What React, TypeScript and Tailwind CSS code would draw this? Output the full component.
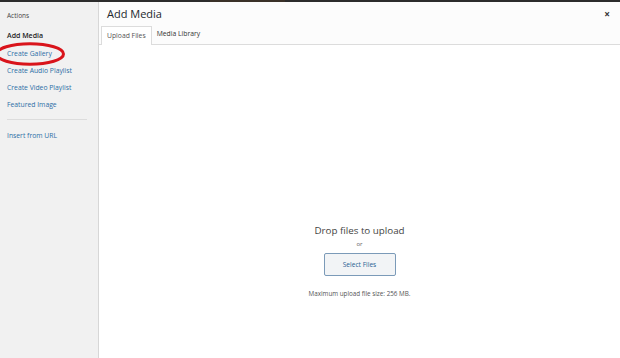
import React from "react";

export default function App() {
  const links = ["Create Gallery", "Create Audio Playlist", "Create Video Playlist", "Featured Image"];
  return (
    <div className="w-[620px] h-[358px] flex flex-col overflow-hidden bg-white" style={{ fontFamily: '"Open Sans", "Noto Sans", sans-serif' }}>
      <div className="h-[2px] bg-[#2c2c2c] flex shrink-0">
        <div className="ml-[210px] w-[75px] bg-[#3a3128]" />
      </div>
      <div className="flex flex-1 min-h-0">
        <aside className="relative w-[99px] shrink-0 bg-[#f1f1f1] border-r border-[#d7d7d7] px-[7px] pt-[8px]">
          <div className="text-[6.5px] text-[#444] leading-[12px]">Actions</div>
          <div className="mt-[8px] text-[7px] text-[#1d1d1d] font-semibold leading-[12px]">Add Media</div>
          <div className="mt-[6px] flex flex-col gap-[5px]">
            {links.map((l) => (
              <div key={l} className="text-[6.8px] text-[#2d6fa6] leading-[12px]">{l}</div>
            ))}
          </div>
          <div className="mt-[8px] mr-[4px] h-px bg-[#dcdcdc]" />
          <div className="mt-[10px] text-[6.8px] text-[#2d6fa6] leading-[12px]">Insert from URL</div>
          <svg className="absolute left-0 top-[38px]" width="70" height="28" viewBox="0 0 70 28">
            <ellipse cx="30" cy="14" rx="33.5" ry="10.2" fill="none" stroke="#d9141b" strokeWidth="3" />
          </svg>
        </aside>
        <main className="flex-1 flex flex-col min-w-0">
          <div className="bg-[#fcfcfc] border-b border-[#dcdcdc] relative">
            <div className="pl-[8px] pt-[3px] h-[22px] text-[11px] text-[#23282d] leading-[18px]">Add Media</div>
            <div className="absolute right-[10px] top-[7px] text-[10px] font-bold text-[#333] leading-[10px]">×</div>
            <div className="flex pl-[2px] h-[20px] items-end">
              <div className="relative top-px h-[19px] px-[5px] flex items-center bg-white border border-b-0 border-[#dcdcdc] text-[6.8px] text-[#555]">Upload Files</div>
              <div className="h-[19px] px-[5px] flex items-center text-[6.8px] text-[#333]">Media Library</div>
            </div>
          </div>
          <div className="flex-1 bg-white flex flex-col items-center pt-[179px]">
            <div className="text-[9.8px] text-[#444] leading-[14px]">Drop files to upload</div>
            <div className="mt-[1px] text-[6px] text-[#666] leading-[10px]">or</div>
            <div className="mt-[4px] w-[72px] h-[23px] flex items-center justify-center bg-[#f2f4f6] border border-[#7b9ab8] rounded-[2px] text-[6.6px] text-[#2a5f93]">Select Files</div>
            <div className="mt-[13px] text-[6.3px] text-[#555] leading-[10px]">Maximum upload file size: 256 MB.</div>
          </div>
        </main>
      </div>
    </div>
  );
}
